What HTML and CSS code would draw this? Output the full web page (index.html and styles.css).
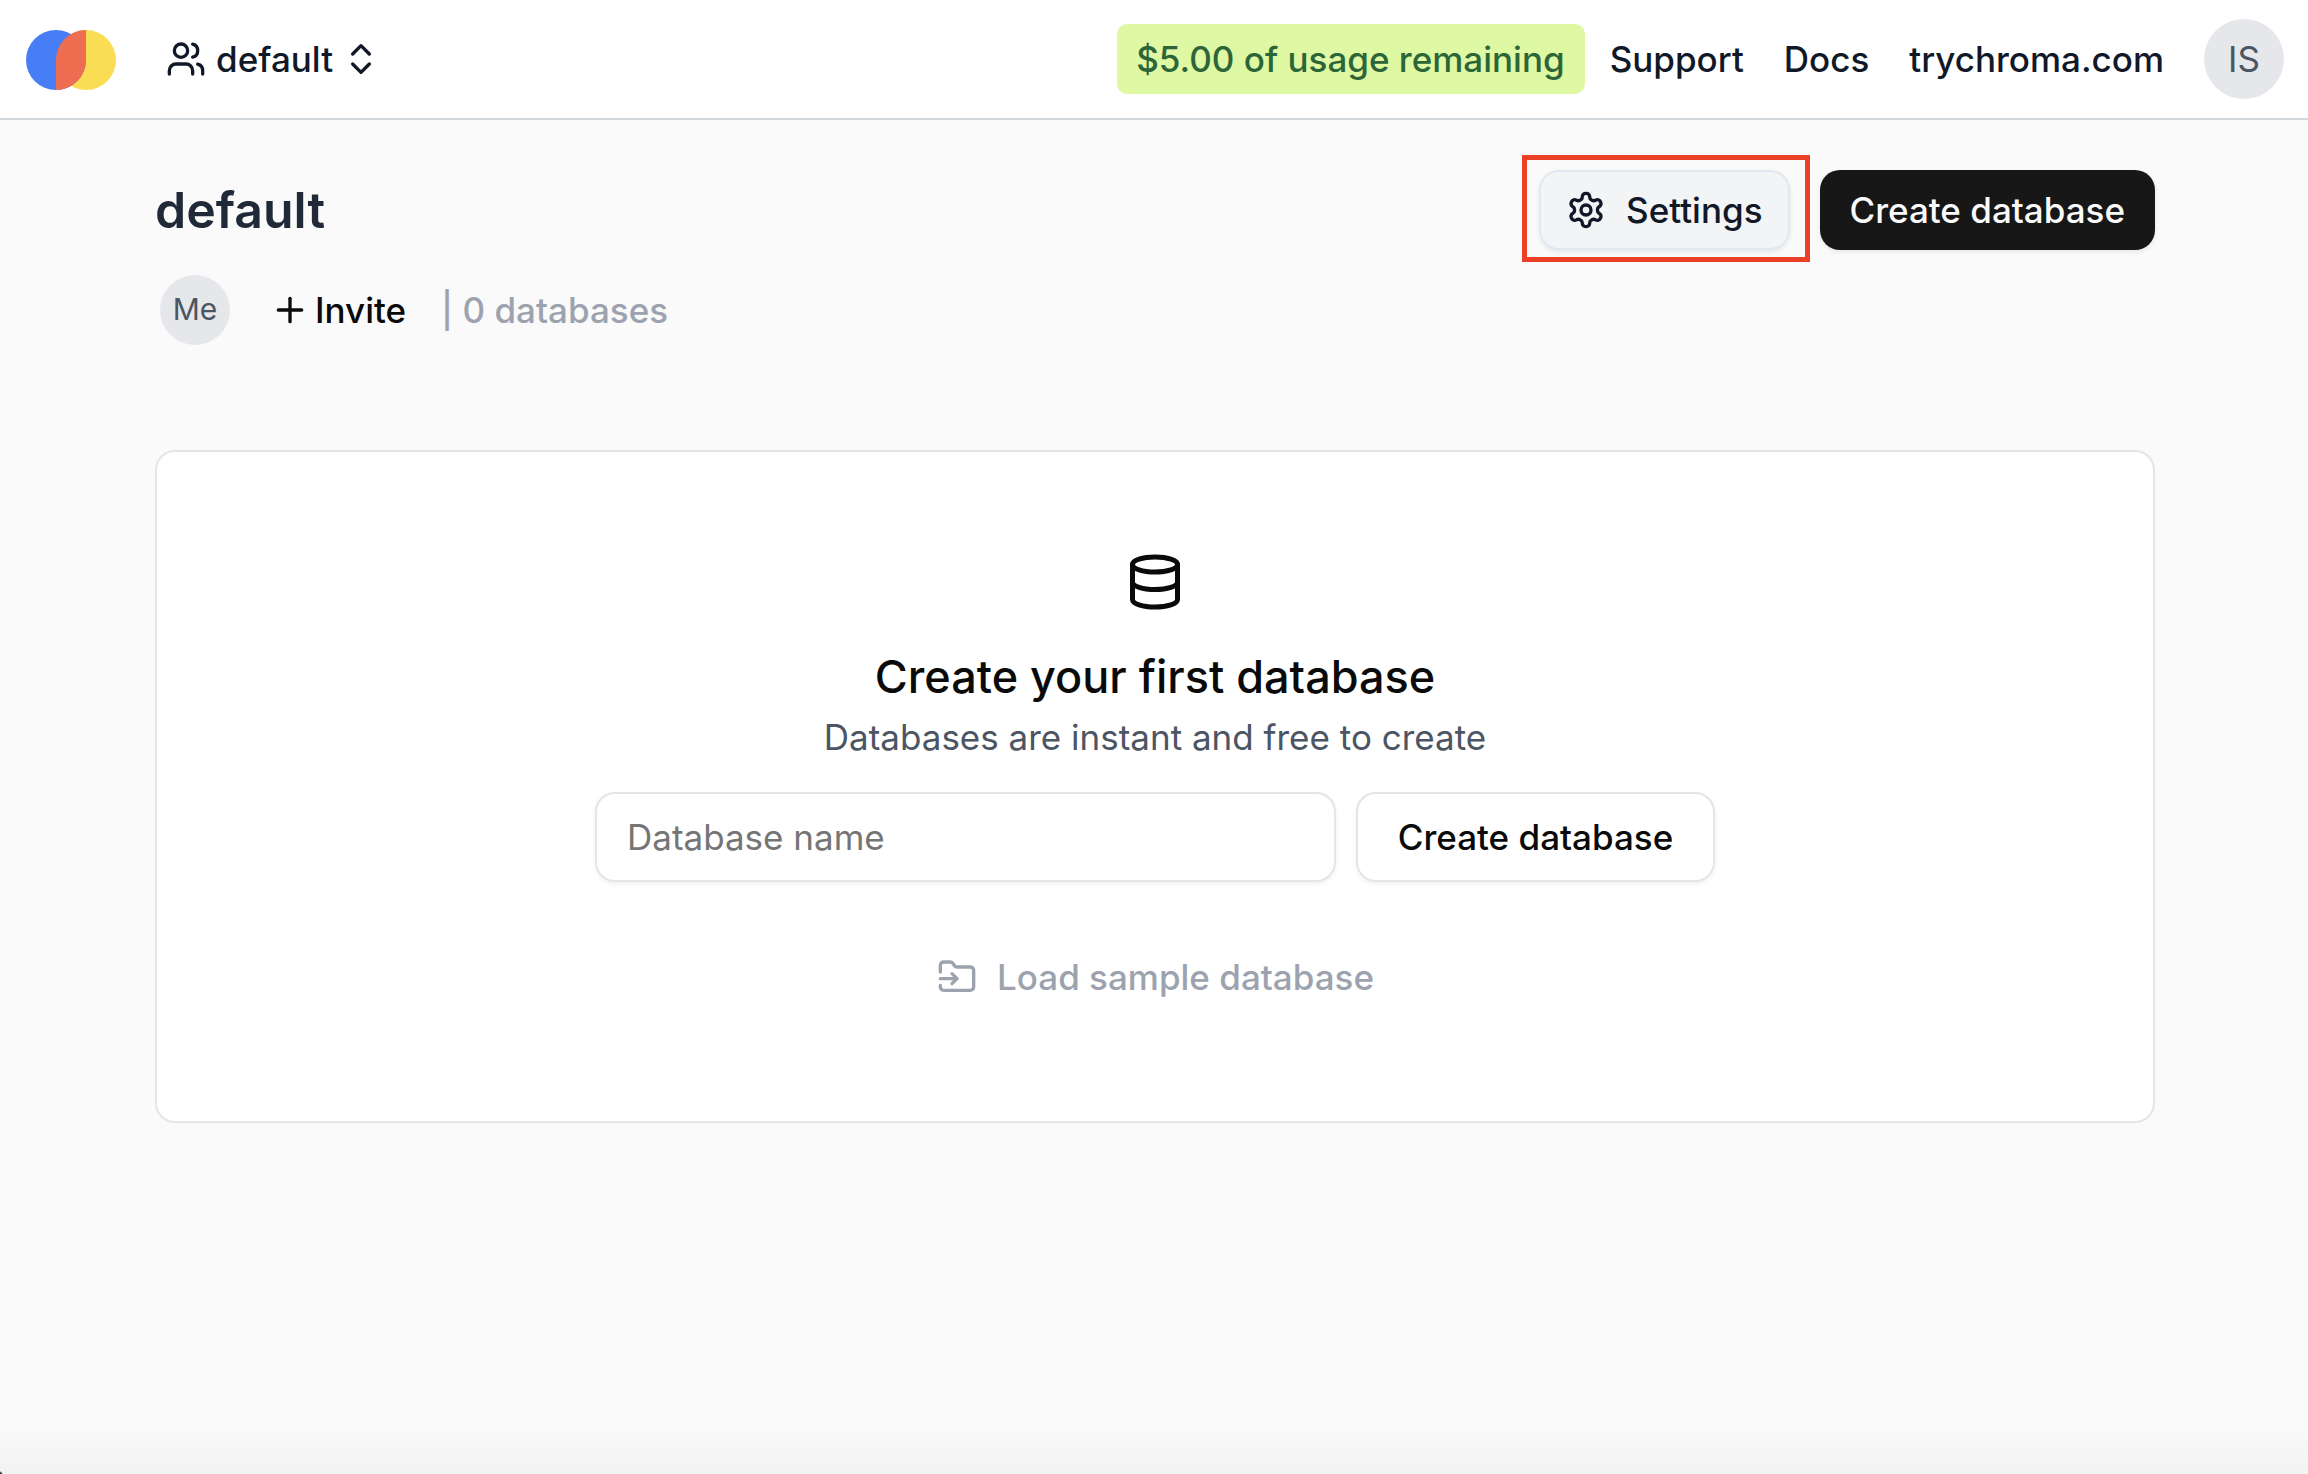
FILE: index.html
```html
<!DOCTYPE html>
<html lang="en">
<head>
<meta charset="utf-8">
<title>default | Chroma</title>
<link rel="stylesheet" href="styles.css">
</head>
<body>
<header class="topbar">
  <svg class="logo" viewBox="0 0 90 60"><circle cx="60" cy="30" r="30" fill="#f9de55"/><circle cx="30" cy="30" r="30" fill="#477ef7"/><path d="M60 0A30 30 0 0 0 30 30V60A30 30 0 0 0 60 30Z" fill="#ee6e52"/></svg>
  <div class="team">
    <svg class="icon" viewBox="0 0 24 24"><path d="M16 21v-2a4 4 0 0 0-4-4H6a4 4 0 0 0-4 4v2"/><circle cx="9" cy="7" r="4"/><path d="M22 21v-2a4 4 0 0 0-3-3.87"/><path d="M16 3.13a4 4 0 0 1 0 7.75"/></svg>
    <span class="team-name">default</span>
    <svg class="icon" viewBox="0 0 24 24"><path d="m7 15 5 5 5-5"/><path d="m7 9 5-5 5 5"/></svg>
  </div>
  <nav class="links">
    <span class="usage">$5.00 of usage remaining</span>
    <a class="link">Support</a>
    <a class="link">Docs</a>
    <a class="link">trychroma.com</a>
    <span class="avatar">IS</span>
  </nav>
</header>
<main class="page">
  <div class="heading">
    <h1 class="title">default</h1>
    <div class="actions">
      <div class="highlight">
        <button class="btn settings"><svg class="icon" viewBox="0 0 24 24"><path d="M12.22 2h-.44a2 2 0 0 0-2 2v.18a2 2 0 0 1-1 1.73l-.43.25a2 2 0 0 1-2 0l-.15-.08a2 2 0 0 0-2.73.73l-.22.38a2 2 0 0 0 .73 2.73l.15.1a2 2 0 0 1 1 1.72v.51a2 2 0 0 1-1 1.74l-.15.09a2 2 0 0 0-.73 2.73l.22.38a2 2 0 0 0 2.73.73l.15-.08a2 2 0 0 1 2 0l.43.25a2 2 0 0 1 1 1.73V20a2 2 0 0 0 2 2h.44a2 2 0 0 0 2-2v-.18a2 2 0 0 1 1-1.73l.43-.25a2 2 0 0 1 2 0l.15.08a2 2 0 0 0 2.73-.73l.22-.39a2 2 0 0 0-.73-2.73l-.15-.08a2 2 0 0 1-1-1.74v-.5a2 2 0 0 1 1-1.74l.15-.09a2 2 0 0 0 .73-2.73l-.22-.38a2 2 0 0 0-2.73-.73l-.15.08a2 2 0 0 1-2 0l-.43-.25a2 2 0 0 1-1-1.73V4a2 2 0 0 0-2-2z"/><circle cx="12" cy="12" r="3"/></svg>Settings</button>
      </div>
      <button class="btn primary">Create database</button>
    </div>
  </div>
  <div class="meta">
    <span class="avatar member">Me</span>
    <span class="invite"><svg class="icon" viewBox="0 0 24 24"><path d="M5 12h14"/><path d="M12 5v14"/></svg>Invite</span>
    <span class="count">| 0 databases</span>
  </div>
  <section class="card">
    <svg class="icon db" viewBox="0 0 24 24"><ellipse cx="12" cy="5" rx="9" ry="3"/><path d="M3 5V19A9 3 0 0 0 21 19V5"/><path d="M3 12A9 3 0 0 0 21 12"/></svg>
    <h2 class="card-title">Create your first database</h2>
    <p class="card-text">Databases are instant and free to create</p>
    <div class="form">
      <input class="field" type="text" placeholder="Database name">
      <button class="btn create">Create database</button>
    </div>
    <div class="sample"><svg class="icon" viewBox="0 0 24 24"><path d="M2 9V5a2 2 0 0 1 2-2h3.9a2 2 0 0 1 1.69.9l.81 1.2a2 2 0 0 0 1.67.9H20a2 2 0 0 1 2 2v10a2 2 0 0 1-2 2H4a2 2 0 0 1-2-2v-1"/><path d="M2 13h10"/><path d="m9 16 3-3-3-3"/></svg>Load sample database</div>
  </section>
</main>
</body>
</html>
```
FILE: styles.css
```css
* { box-sizing: border-box; }

body {
  margin: 0;
  height: 1474px;
  overflow: hidden;
  display: flex;
  flex-direction: column;
  background:
    radial-gradient(circle at 0 100%, #222 1px, transparent 3px),
    linear-gradient(to bottom, transparent calc(100% - 52px), rgba(0, 0, 0, 0.03)),
    #fafafa;
  color: #0a0a0a;
  font: 500 35px/50px Inter, "Liberation Sans", sans-serif;
  font-optical-sizing: none;
}

h1, h2, p { margin: 0; }

.icon {
  width: 40px;
  height: 40px;
  flex: none;
  fill: none;
  stroke: currentColor;
  stroke-width: 2;
  stroke-linecap: round;
  stroke-linejoin: round;
}

.topbar {
  height: 120px;
  flex: none;
  display: flex;
  align-items: center;
  padding: 0 24px 0 26px;
  background: #fff;
  border-bottom: 2px solid #d1d7db;
  color: #111827;
}

.logo { width: 90px; height: 60px; margin-top: 2px; }

.team { display: flex; align-items: center; margin-left: 50px; }
.team-name { margin: 0 8px 0 10px; }

.links { display: flex; align-items: center; gap: 40px; margin-left: auto; }

.usage {
  height: 70px;
  padding: 10px 20px 10px 19px;
  margin-right: -15px;
  border-radius: 10px;
  background: #def8a3;
  color: #2c6638;
}

.avatar {
  width: 80px;
  height: 80px;
  border-radius: 50%;
  display: flex;
  align-items: center;
  justify-content: center;
  background: #e5e7eb;
  color: #4b5563;
  font-weight: 400;
}

.page { width: 2000px; margin-left: 155px; padding-top: 35px; }

.heading { display: flex; align-items: center; justify-content: space-between; height: 107px; }
.title { margin-top: 3px; font-size: 50px; line-height: 70px; font-weight: 600; color: #1f2937; }
.actions { display: flex; align-items: center; gap: 10px; }

.highlight {
  height: 107px;
  padding: 10px 15px 0 12px;
  border: 5px solid #eb4025;
}

.btn {
  height: 80px;
  display: flex;
  align-items: center;
  justify-content: center;
  padding: 0 30px;
  border: 0;
  border-radius: 20px;
  font: inherit;
  font-optical-sizing: none;
  color: inherit;
  box-shadow: 0 2px 5px rgba(0, 0, 0, 0.08);
}
.settings { gap: 20px; padding: 0 26px 0 25px; border: 2px solid #e2e8f0; background: #f3f4f6; color: #111827; }
.primary { margin-top: 3px; padding: 0 30px 0 29px; background: #171717; color: #fafafa; }

.meta { display: flex; align-items: center; height: 70px; margin-top: 13px; padding-left: 5px; }
.member { width: 70px; height: 70px; font-size: 30px; padding-bottom: 2px; }
.invite { display: flex; align-items: center; gap: 5px; margin-left: 40px; }
.count { margin-left: 35px; color: #9ca3af; }

.card {
  height: 673px;
  margin-top: 105px;
  padding-top: 100px;
  border: 2px solid #e5e5e5;
  border-radius: 20px;
  background: #fff;
  display: flex;
  flex-direction: column;
  align-items: center;
}
.db { width: 60px; height: 60px; }
.card-title { margin-top: 34px; font-size: 45px; line-height: 62px; font-weight: 500; }
.card-text { margin-top: 4px; font-weight: 400; color: #4b5563; }
.form { display: flex; gap: 20px; margin-top: 30px; }
.field {
  width: 741px;
  height: 90px;
  padding: 0 30px;
  border: 2px solid #e5e5e5;
  border-radius: 20px;
  background: #fff;
  font: inherit;
  font-weight: 400;
  box-shadow: 0 2px 5px rgba(0, 0, 0, 0.06);
}
.field::placeholder { color: #757575; }
.create { width: 359px; height: 90px; border: 2px solid #e5e5e5; background: #fff; box-shadow: 0 2px 5px rgba(0, 0, 0, 0.06); }
.sample { display: flex; align-items: center; gap: 20px; padding-left: 1px; margin-top: 70px; color: #9ca3af; }
```
